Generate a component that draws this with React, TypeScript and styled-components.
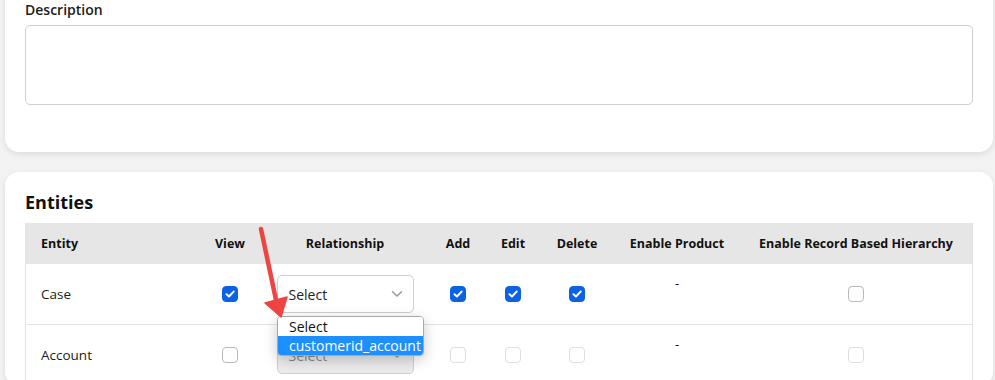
import React from "react";
import styled, { createGlobalStyle } from "styled-components";

const GlobalStyle = createGlobalStyle`
  html, body {
    margin: 0;
    padding: 0;
    background: #f3f3f3;
    font-family: "Open Sans", "Liberation Sans", sans-serif;
    color: #1b1b1b;
    overflow: hidden;
  }
`;

const Page = styled.div`
  display: flex;
  flex-direction: column;
  gap: 20px;
  padding: 0 2px 0 5px;
`;

const Card = styled.div<{ $top?: boolean }>`
  background: #fff;
  border-radius: 14px;
  box-shadow: 0 2px 6px rgba(0, 0, 0, 0.1);
  padding: ${(p) => (p.$top ? "16px 20px 47px" : "17px 20px 0")};
  margin-top: ${(p) => (p.$top ? "-16px" : "0")};
  position: relative;
`;

const Label = styled.div`
  font-size: 14px;
  line-height: 20px;
  font-weight: 600;
  margin-bottom: 5px;
`;

const TextArea = styled.div`
  height: 78px;
  border: 1px solid #cfcfcf;
  border-radius: 5px;
`;

const Title = styled.div`
  font-size: 18px;
  line-height: 26px;
  font-weight: 700;
  color: #111;
  margin-bottom: 8px;
`;

const cols = "174px 60px 170px 56px 54px 74px 126px 1fr";

const Table = styled.div`
  border-left: 1px solid #e2e2e2;
  border-right: 1px solid #e2e2e2;
`;

const HeadRow = styled.div`
  display: grid;
  grid-template-columns: ${cols};
  height: 41px;
  align-items: center;
  background: #e6e6e6;
`;

const HeadCell = styled.div<{ $left?: boolean }>`
  font-size: 12.5px;
  font-weight: 700;
  color: #111;
  text-align: ${(p) => (p.$left ? "left" : "center")};
  padding-left: ${(p) => (p.$left ? "15px" : "0")};
  white-space: nowrap;
`;

const Row = styled.div`
  display: grid;
  grid-template-columns: ${cols};
  height: 60px;
  align-items: center;
  border-bottom: 1px solid #e2e2e2;
`;

const Cell = styled.div<{ $left?: boolean; $top?: boolean }>`
  display: flex;
  justify-content: ${(p) => (p.$left ? "flex-start" : "center")};
  padding-left: ${(p) => (p.$left ? "15px" : "0")};
  align-self: ${(p) => (p.$top ? "start" : "center")};
  padding-top: ${(p) => (p.$top ? "9px" : "0")};
  font-size: 13.5px;
  position: relative;
`;

const Dash = styled.span`
  font-size: 13px;
  line-height: 20px;
  color: #111;
`;

const Box = styled.span<{ $checked?: boolean; $disabled?: boolean }>`
  width: 16px;
  height: 16px;
  box-sizing: border-box;
  border-radius: 4px;
  display: inline-flex;
  align-items: center;
  justify-content: center;
  background: ${(p) => (p.$checked ? "#0b62e4" : "#fff")};
  border: 1px solid
    ${(p) => (p.$checked ? "#0b62e4" : p.$disabled ? "#dedede" : "#b9b9b9")};
`;

const SelectBox = styled.div<{ $disabled?: boolean }>`
  width: 137px;
  height: 38px;
  box-sizing: border-box;
  border: 1px solid #cfcfcf;
  border-radius: 5px;
  background: ${(p) => (p.$disabled ? "#ececec" : "#fff")};
  color: ${(p) => (p.$disabled ? "#8a8a8a" : "#222")};
  display: flex;
  align-items: center;
  justify-content: space-between;
  padding: 0 10px 0 11px;
  font-size: 14px;
`;

const Menu = styled.div`
  position: absolute;
  left: 277px;
  top: 316px;
  width: 147px;
  box-sizing: border-box;
  background: #fff;
  border: 1px solid #a9a9a9;
  border-radius: 4px;
  box-shadow: 0 4px 14px rgba(0, 0, 0, 0.22);
  overflow: hidden;
  z-index: 5;
`;

const MenuItem = styled.div<{ $active?: boolean }>`
  height: 19px;
  line-height: 19px;
  padding-left: 11px;
  font-size: 14px;
  white-space: nowrap;
  background: ${(p) => (p.$active ? "#1e8fff" : "#fff")};
  color: ${(p) => (p.$active ? "#fff" : "#111")};
`;

const Arrow = styled.svg`
  position: absolute;
  left: 0;
  top: 0;
  pointer-events: none;
  z-index: 6;
`;

const Check = () => (
  <svg width="10" height="8" viewBox="0 0 10 8">
    <path d="M1.5 4.2 L4 6.5 L8.6 1.6" fill="none" stroke="#fff" strokeWidth="2" strokeLinecap="round" strokeLinejoin="round" />
  </svg>
);

const Chevron = () => (
  <svg width="12" height="8" viewBox="0 0 12 8">
    <path d="M1.5 1.8 L6 6 L10.5 1.8" fill="none" stroke="#9a9a9a" strokeWidth="1.5" strokeLinecap="round" />
  </svg>
);

const CheckBox = ({ checked, disabled }: { checked?: boolean; disabled?: boolean }) => (
  <Box $checked={checked} $disabled={disabled}>
    {checked && <Check />}
  </Box>
);

const headers = ["View", "Relationship", "Add", "Edit", "Delete", "Enable Product", "Enable Record Based Hierarchy"];

export default function App() {
  return (
    <>
      <GlobalStyle />
      <Page>
        <Card $top>
          <Label>Description</Label>
          <TextArea />
        </Card>
        <Card>
          <Title>Entities</Title>
          <Table>
            <HeadRow>
              <HeadCell $left>Entity</HeadCell>
              {headers.map((h) => (
                <HeadCell key={h}>{h}</HeadCell>
              ))}
            </HeadRow>
            <Row>
              <Cell $left>Case</Cell>
              <Cell><CheckBox checked /></Cell>
              <Cell>
                <SelectBox>
                  Select
                  <Chevron />
                </SelectBox>
              </Cell>
              <Cell><CheckBox checked /></Cell>
              <Cell><CheckBox checked /></Cell>
              <Cell><CheckBox checked /></Cell>
              <Cell $top><Dash>-</Dash></Cell>
              <Cell><CheckBox /></Cell>
            </Row>
            <Row>
              <Cell $left>Account</Cell>
              <Cell><CheckBox /></Cell>
              <Cell>
                <SelectBox $disabled>
                  Select
                  <Chevron />
                </SelectBox>
              </Cell>
              <Cell><CheckBox disabled /></Cell>
              <Cell><CheckBox disabled /></Cell>
              <Cell><CheckBox disabled /></Cell>
              <Cell $top><Dash>-</Dash></Cell>
              <Cell><CheckBox disabled /></Cell>
            </Row>
          </Table>
        </Card>
      </Page>
      <Menu>
        <MenuItem>Select</MenuItem>
        <MenuItem $active>customerid_account</MenuItem>
      </Menu>
      <Arrow width="995" height="380" viewBox="0 0 995 380">
        <line x1="261" y1="229" x2="276" y2="300" stroke="#ef4444" strokeWidth="4.5" strokeLinecap="round" />
        <polygon points="265,303 287,297 281,317" fill="#ef4444" stroke="#ef4444" strokeWidth="1.5" strokeLinejoin="round" />
      </Arrow>
    </>
  );
}
